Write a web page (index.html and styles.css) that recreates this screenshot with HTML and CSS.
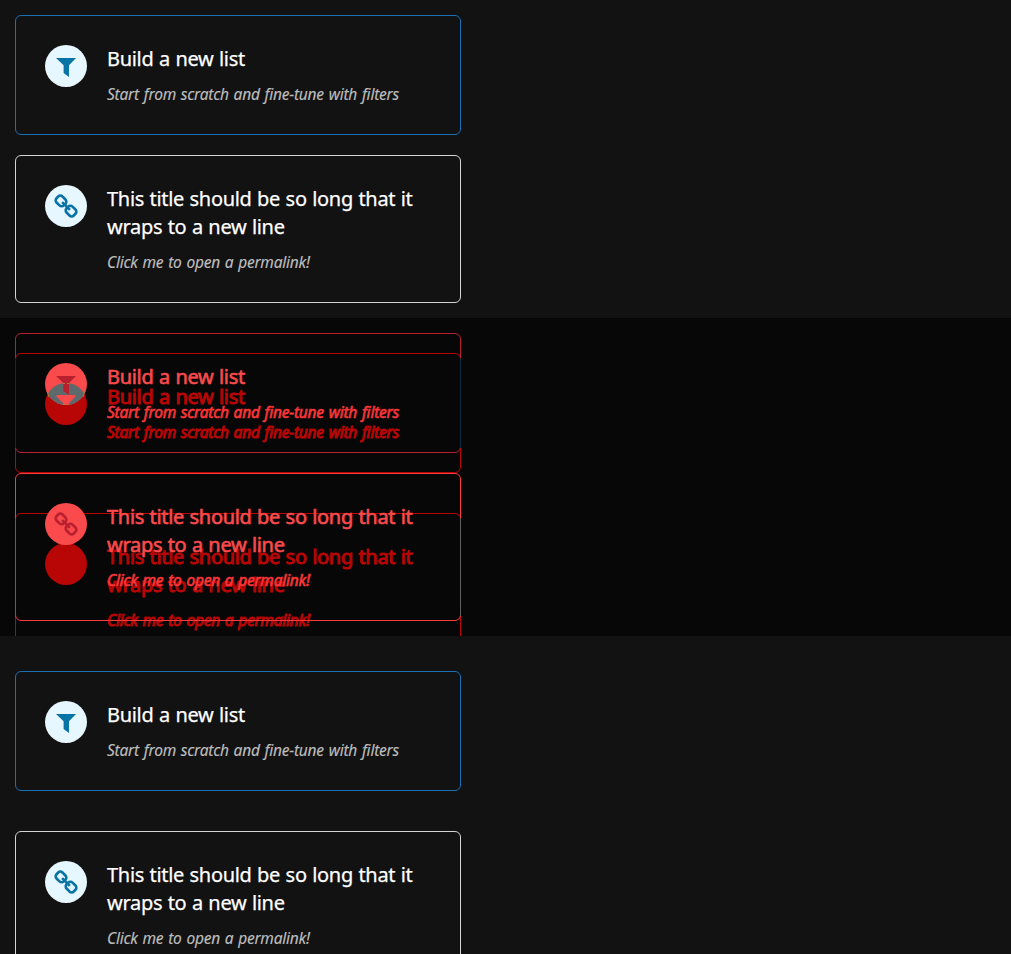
FILE: index.html
```html
<!DOCTYPE html>
<html lang="en">
<head>
<meta charset="utf-8">
<title>List options</title>
<link rel="stylesheet" href="styles.css">
</head>
<body>
<svg class="defs" aria-hidden="true">
  <symbol id="funnel" viewBox="0 0 42 42"><path d="M11 13H31L24 20.3V32L18.6 28V20.3Z"/></symbol>
  <symbol id="link" viewBox="0 0 42 42"><g transform="rotate(45 21 21)" fill="none" stroke="currentColor" stroke-width="2.6"><rect x="8.8" y="16.8" width="10.2" height="8.4" rx="3"/><rect x="23" y="16.8" width="10.2" height="8.4" rx="3"/><path d="M15.5 21H26.5"/></g></symbol>
</svg>
<main>
  <section class="panel">
    <article class="card primary"><svg class="icon"><use href="#funnel"/></svg><div class="copy"><h2>Build a new list</h2><p>Start from scratch and fine-tune with filters</p></div></article>
    <article class="card"><svg class="icon"><use href="#link"/></svg><div class="copy"><h2>This title should be so long that it<br>wraps to a new line</h2><p>Click me to open a permalink!</p></div></article>
  </section>
  <section class="panel diff">
    <div class="layer after">
      <article class="card"><span class="icon"></span><div class="copy"><h2>Build a new list</h2><p>Start from scratch and fine-tune with filters</p></div></article>
      <article class="card"><span class="icon"></span><div class="copy"><h2>This title should be so long that it<br>wraps to a new line</h2><p>Click me to open a permalink!</p></div></article>
    </div>
    <div class="layer before">
      <article class="card primary"><svg class="icon"><use href="#funnel"/></svg><div class="copy"><h2>Build a new list</h2><p>Start from scratch and fine-tune with filters</p></div></article>
      <article class="card"><svg class="icon"><use href="#link"/></svg><div class="copy"><h2>This title should be so long that it<br>wraps to a new line</h2><p>Click me to open a permalink!</p></div></article>
    </div>
    <div class="shared shared-first"></div>
    <div class="shared shared-second"></div>
    <svg class="lens" viewBox="0 0 42 62">
      <clipPath id="upper"><circle cx="21" cy="21" r="21"/></clipPath>
      <clipPath id="lower"><circle cx="21" cy="41" r="21"/></clipPath>
      <g clip-path="url(#upper)"><g clip-path="url(#lower)">
        <rect width="42" height="62" fill="#5e696c"/>
        <path d="M13 32H29L31 33L24 40V42H18V40L11 33Z" fill="#fa4a4c"/>
        <path d="M18.3 20H24V32L18.3 28Z" fill="#b8202f"/>
      </g></g>
      <path d="M2 28l2 6M40 28l-2 6M18 20.5h2M22 20.5h2M18 41.5h2M22 41.5h2" stroke="#b17a2c"/>
    </svg>
  </section>
  <section class="panel spaced">
    <article class="card primary"><svg class="icon"><use href="#funnel"/></svg><div class="copy"><h2>Build a new list</h2><p>Start from scratch and fine-tune with filters</p></div></article>
    <article class="card"><svg class="icon"><use href="#link"/></svg><div class="copy"><h2>This title should be so long that it<br>wraps to a new line</h2><p>Click me to open a permalink!</p></div></article>
  </section>
</main>
</body>
</html>
```
FILE: styles.css
```css
* { box-sizing: border-box; }
body { margin: 0; height: 954px; overflow: hidden; background: #121212; font-family: "Noto Sans", sans-serif; }
.defs { position: absolute; width: 0; height: 0; }
.panel { height: 318px; padding: 15px; display: flex; flex-direction: column; gap: 20px; overflow: hidden; background: #121212; }
.spaced { padding-top: 35px; gap: 40px; }
.card { width: 446px; flex: none; display: flex; gap: 20px; padding: 29px; border: 1px solid #d4d4d4; border-radius: 6px; }
.primary { border-color: #1b6fb5; }
.icon { display: block; flex: none; width: 42px; height: 42px; border-radius: 50%; background: #e6f7ff; color: #0873a5; fill: currentColor; }
.copy { white-space: nowrap; }
h2 { margin: 0 0 9px; color: #fff; font-size: 20px; line-height: 28px; font-weight: 400; letter-spacing: -0.3px; word-spacing: 0.6px; -webkit-text-stroke: 0.25px; }
p { margin: 0 0 -1px; color: #bdbdbd; font-size: 15.5px; line-height: 24px; font-style: italic; letter-spacing: -0.22px; word-spacing: 1px; -webkit-text-stroke: 0.15px; }
.diff { position: relative; background: #070707; }
.layer { position: absolute; left: 15px; top: 15px; display: flex; flex-direction: column; gap: 20px; }
.after { top: 35px; gap: 40px; }
.after .card { border-color: #b80505; }
.after .icon { background: #b80505; }
.after h2, .after p { color: #b80505; -webkit-text-stroke: 1px #b80505; }
.before .card { border-color: #fa3a3c; }
.before .primary { border-color: #b8202f; }
.before .icon { background: #fa4a4c; color: #b8202f; }
.before h2 { color: #fa4a4c; -webkit-text-stroke: 0.6px #fa4a4c; }
.before p { color: #fa3638; -webkit-text-stroke: 0.6px #fa3638; }
.shared { position: absolute; left: 15px; width: 446px; border: solid #0b2a42; border-width: 0 1px; }
.shared-first { top: 40px; height: 90px; }
.shared-second { top: 200px; height: 98px; border-color: #606060; }
.lens { position: absolute; left: 45px; top: 45px; width: 42px; height: 62px; }
```
